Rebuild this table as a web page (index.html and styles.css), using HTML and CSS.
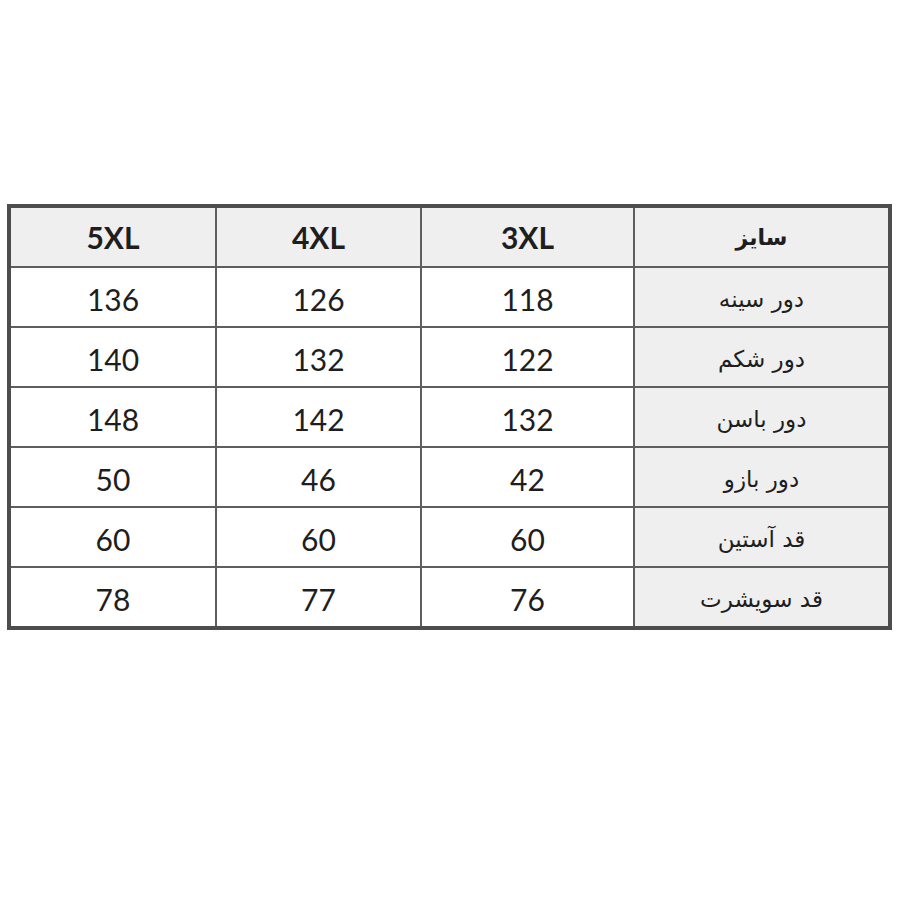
FILE: index.html
```html
<!DOCTYPE html>
<html lang="fa">
<head>
<meta charset="utf-8">
<link rel="stylesheet" href="styles.css">
</head>
<body>
<table class="size-table" dir="rtl">
  <colgroup>
    <col class="c-label"><col class="c-3"><col class="c-4"><col class="c-5">
  </colgroup>
  <thead>
    <tr class="head">
      <th class="label">سایز</th><th>3XL</th><th>4XL</th><th>5XL</th>
    </tr>
  </thead>
  <tbody>
    <tr><td class="label">دور سینه</td><td>118</td><td>126</td><td>136</td></tr>
    <tr><td class="label">دور شکم</td><td>122</td><td>132</td><td>140</td></tr>
    <tr><td class="label">دور باسن</td><td>132</td><td>142</td><td>148</td></tr>
    <tr><td class="label">دور بازو</td><td>42</td><td>46</td><td>50</td></tr>
    <tr><td class="label">قد آستین</td><td>60</td><td>60</td><td>60</td></tr>
    <tr><td class="label">قد سویشرت</td><td>76</td><td>77</td><td>78</td></tr>
  </tbody>
</table>
</body>
</html>
```
FILE: styles.css
```css
html, body {
  margin: 0;
  padding: 0;
  background: #ffffff;
}
body {
  padding-top: 204px;
  padding-left: 7px;
}
.size-table {
  border-collapse: collapse;
  width: 885px;
  table-layout: fixed;
  border: 4px solid #4d4d4d;
  color: #1e1e1e;
  font-family: Lato, "Open Sans", sans-serif;
}
.c-label { width: 256px; }
.c-3 { width: 213px; }
.c-4 { width: 205px; }
.c-5 { width: 207px; }
.size-table th,
.size-table td {
  border: 2px solid #5e5e5e;
  height: 54px;
  padding: 4px 0 0;
  text-align: center;
  vertical-align: middle;
  font-size: 30px;
  font-weight: 400;
}
.size-table tr.head th {
  background: #efefef;
  font-weight: 700;
  height: 58px;
  padding-top: 0;
}
.size-table .label {
  background: #efefef;
  font-family: "DejaVu Sans", sans-serif;
  font-size: 23px;
}
.size-table tr.head th.label {
  font-weight: 700;
  font-size: 22px;
}
```
